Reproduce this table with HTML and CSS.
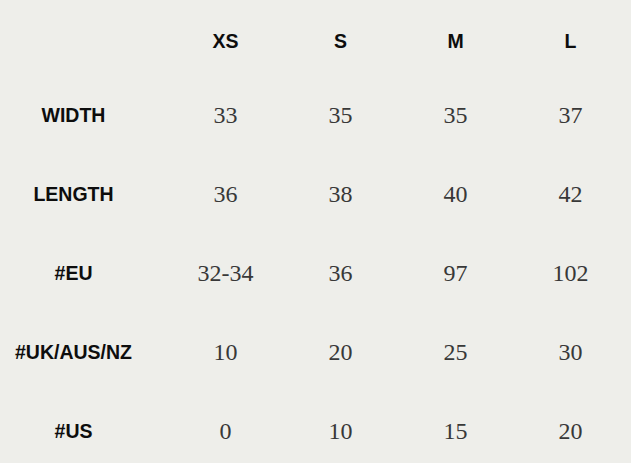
FILE: index.html
```html
<!DOCTYPE html>
<html lang="en">
<head>
<meta charset="utf-8">
<title>Size chart</title>
<link rel="stylesheet" href="styles.css">
</head>
<body>
<div class="chart">
  <div class="cell head corner"></div>
  <div class="cell head">XS</div>
  <div class="cell head">S</div>
  <div class="cell head">M</div>
  <div class="cell head">L</div>

  <div class="cell label">WIDTH</div>
  <div class="cell num">33</div>
  <div class="cell num">35</div>
  <div class="cell num">35</div>
  <div class="cell num">37</div>

  <div class="cell label">LENGTH</div>
  <div class="cell num">36</div>
  <div class="cell num">38</div>
  <div class="cell num">40</div>
  <div class="cell num">42</div>

  <div class="cell label">#EU</div>
  <div class="cell num">32-34</div>
  <div class="cell num">36</div>
  <div class="cell num">97</div>
  <div class="cell num">102</div>

  <div class="cell label">#UK/AUS/NZ</div>
  <div class="cell num">10</div>
  <div class="cell num">20</div>
  <div class="cell num">25</div>
  <div class="cell num">30</div>

  <div class="cell label">#US</div>
  <div class="cell num">0</div>
  <div class="cell num">10</div>
  <div class="cell num">15</div>
  <div class="cell num">20</div>
</div>
</body>
</html>
```
FILE: styles.css
```css
html, body {
  margin: 0;
  padding: 0;
  background: #eeeeea;
}
.chart {
  display: grid;
  grid-template-columns: 168px repeat(4, 115px);
  grid-template-rows: 76px repeat(5, 79px);
  width: 631px;
  height: 463px;
  overflow: hidden;
}
.cell {
  display: flex;
  align-items: center;
  justify-content: center;
  line-height: 1;
}
.head, .label {
  font-family: "Liberation Sans", Arial, sans-serif;
  font-weight: bold;
  font-size: 19.5px;
  color: #0d0d0d;
}
.head {
  padding-top: 8px;
}
.label {
  padding-right: 21px;
}
.num {
  font-family: "Liberation Serif", "Times New Roman", serif;
  font-size: 24px;
  color: #383838;
  padding-bottom: 2px;
}
```
